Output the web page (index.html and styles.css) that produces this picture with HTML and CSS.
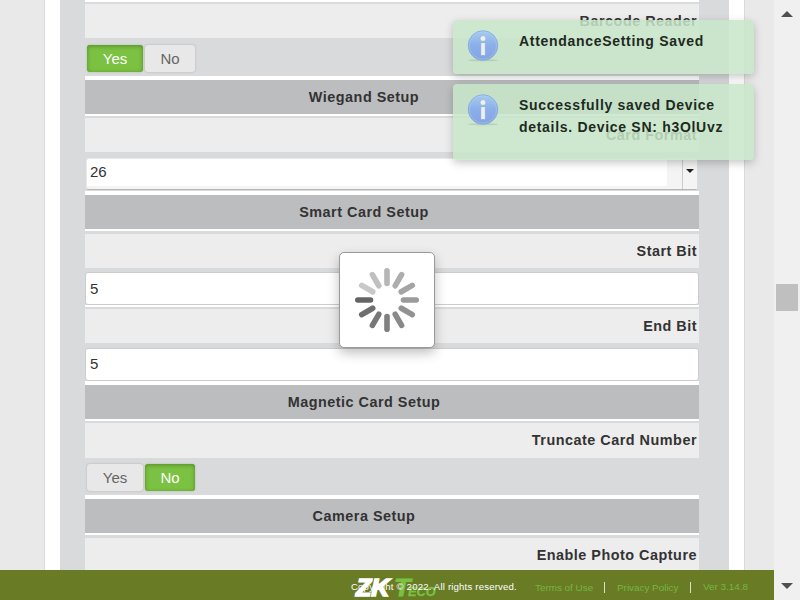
FILE: index.html
```
<!DOCTYPE html>
<html lang="en">
<head>
<meta charset="utf-8">
<title>Device Settings</title>
<link rel="stylesheet" href="styles.css">
</head>
<body>
<div class="viewport">
  <div class="page">
    <main class="sheet">
      <div class="panel">
        <form class="settings">
          <div class="rule first"></div>
          <div class="label"><span>Barcode Reader</span></div>
          <div class="toggle"><span class="btn yes on">Yes</span><span class="btn no">No</span></div>
          <div class="header"><span>Wiegand Setup</span></div>
          <div class="label"><span>Card Format</span></div>
          <div class="field select"><span class="value">26</span><span class="inner"></span><span class="drop"><svg width="8" height="4" viewBox="0 0 8 4"><path d="M0 0H8L4 4Z" fill="#222"/></svg></span></div>
          <div class="header"><span>Smart Card Setup</span></div>
          <div class="label gap3"><span>Start Bit</span></div>
          <div class="field start"><span class="value">5</span></div>
          <div class="rule"></div>
          <div class="label"><span>End Bit</span></div>
          <div class="field end"><span class="value">5</span></div>
          <div class="header"><span>Magnetic Card Setup</span></div>
          <div class="label tall"><span>Truncate Card Number</span></div>
          <div class="toggle second"><span class="btn yes">Yes</span><span class="btn no on">No</span></div>
          <div class="header"><span>Camera Setup</span></div>
          <div class="label gap3"><span>Enable Photo Capture</span></div>
        </form>
      </div>
    </main>
    <footer class="footer">
      <div class="logo"><span class="zk">ZK</span><span class="t">T</span><span class="eco">ECO</span></div>
      <span class="copy">Copyright © 2022. All rights reserved.</span>
      <span class="link terms">Terms of Use</span>
      <span class="link privacy">Privacy Policy</span>
      <span class="link version">Ver 3.14.8</span>
    </footer>
  </div>
  <aside class="scrollbar">
    <svg class="up" width="12" height="6" viewBox="0 0 12 6"><path d="M0 6L6 0L12 6Z" fill="#505050"/></svg>
    <div class="thumb"></div>
    <svg class="down" width="12" height="6" viewBox="0 0 12 6"><path d="M0 0H12L6 6Z" fill="#505050"/></svg>
  </aside>
  <div class="notices">
    <div class="notice short">
      <svg class="info" width="34" height="34" viewBox="0 0 34 34">
        <defs><linearGradient id="blue" x1="0" y1="0" x2="0" y2="1"><stop offset="0" stop-color="#a5ccef"/><stop offset=".5" stop-color="#8bafe9"/><stop offset="1" stop-color="#85a3e4"/></linearGradient></defs>
        <ellipse cx="17" cy="31.3" rx="15" ry="1" fill="#7b9c82" opacity=".3"/>
        <circle cx="17" cy="16.5" r="14.8" fill="url(#blue)" stroke="#82a8dc" stroke-width=".8"/>
        <circle cx="17" cy="16.5" r="13.6" fill="none" stroke="#b6d2f5" stroke-width=".8" opacity=".5"/>
        <circle cx="17" cy="9.5" r="2.9" fill="#eef2ef" stroke="#789cd8" stroke-width=".5"/>
        <rect x="14.8" y="13.7" width="4.5" height="12.8" rx=".5" fill="#eef0ed" stroke="#789cd8" stroke-width=".5"/>
      </svg>
      <p>AttendanceSetting Saved</p>
    </div>
    <div class="notice long">
      <svg class="info" width="34" height="34" viewBox="0 0 34 34">
        <ellipse cx="17" cy="31.3" rx="15" ry="1" fill="#7b9c82" opacity=".3"/>
        <circle cx="17" cy="16.5" r="14.8" fill="url(#blue)" stroke="#82a8dc" stroke-width=".8"/>
        <circle cx="17" cy="16.5" r="13.6" fill="none" stroke="#b6d2f5" stroke-width=".8" opacity=".5"/>
        <circle cx="17" cy="9.5" r="2.9" fill="#eef2ef" stroke="#789cd8" stroke-width=".5"/>
        <rect x="14.8" y="13.7" width="4.5" height="12.8" rx=".5" fill="#eef0ed" stroke="#789cd8" stroke-width=".5"/>
      </svg>
      <p>Successfully saved Device<br>details. Device SN: h3OlUvz</p>
    </div>
  </div>
  <div class="loader">
    <svg width="66" height="66" viewBox="-33 -33 66 66" stroke-width="5.6" stroke-linecap="round">
      <path d="M0-16.5V-29.2" stroke="#b6b6b6"/>
      <path d="M0-16.5V-29.2" stroke="#adadad" transform="rotate(30)"/>
      <path d="M0-16.5V-29.2" stroke="#a4a4a4" transform="rotate(60)"/>
      <path d="M0-16.5V-29.2" stroke="#9b9b9b" transform="rotate(90)"/>
      <path d="M0-16.5V-29.2" stroke="#929292" transform="rotate(120)"/>
      <path d="M0-16.5V-29.2" stroke="#898989" transform="rotate(150)"/>
      <path d="M0-16.5V-29.2" stroke="#808080" transform="rotate(180)"/>
      <path d="M0-16.5V-29.2" stroke="#777" transform="rotate(210)"/>
      <path d="M0-16.5V-29.2" stroke="#6e6e6e" transform="rotate(240)"/>
      <path d="M0-16.5V-29.2" stroke="#656565" transform="rotate(270)"/>
      <path d="M0-16.5V-29.2" stroke="#c8c8c8" transform="rotate(300)"/>
      <path d="M0-16.5V-29.2" stroke="#bfbfbf" transform="rotate(330)"/>
    </svg>
  </div>
</div>
</body>
</html>
```
FILE: styles.css
```
* { box-sizing: border-box; }
body { margin: 0; font-family: "Liberation Sans", Arial, sans-serif; font-size: 14px; color: #333; }
.viewport { position: relative; display: flex; width: 800px; height: 600px; overflow: hidden; }
.page { display: flex; flex-direction: column; width: 774px; height: 600px; background: #e9e9e9; }
.sheet { flex: 1; min-height: 0; overflow: hidden; width: 701px; margin-left: 44px; padding: 0 15px; background: #fff; border: solid #dadada; border-width: 0 1px; }
.panel { height: 570px; padding: 0 30px 0 25px; background: #d9dadc; }
.settings { width: 614px; }
.rule { height: 2px; background: #fff; }
.label { height: 36px; padding-right: 2px; border-top: 2px solid #d9dadc; background: #ededed; text-align: right; font-size: 14.4px; font-weight: bold; line-height: 34px; letter-spacing: .5px; }
.label.gap3 { height: 37px; border-top-width: 3px; }
.label.tall { height: 37px; line-height: 34px; }
.header { height: 40px; padding-right: 56px; border-top: 4px solid #fff; border-bottom: 2px solid #fff; background: #bcbdbf; text-align: center; font-size: 14.4px; font-weight: bold; line-height: 34px; letter-spacing: .5px; }
.toggle { display: flex; gap: 2px; height: 38px; padding: 7px 0 0 2px; }
.toggle.second { height: 37px; padding-top: 6px; }
.btn { height: 27px; border-radius: 3px; background: #e8e8e8; color: #666; box-shadow: 0 0 2px #aaa; font-size: 15px; line-height: 27px; text-align: center; }
.yes { width: 56px; }
.no { width: 50px; }
.btn.on { color: #fff; background: #7bc142; box-shadow: inset 0 1px 4px #568b28, 0 0 2px #9b9; }
.field { display: flex; height: 33px; padding-left: 4px; border: 1px solid #ccc; border-radius: 3px; background: #fff; font-size: 15px; line-height: 32px; }
.start { margin-top: 4px; }
.end { margin-top: 5px; line-height: 30px; }
.select { height: 32px; margin: 6px 1px 1px; padding-left: 3px; border: solid #e9e9e9; border-width: 1px 0 1px 1px; border-bottom-color: #b7b7b7; background: #f4f4f4; background-image: linear-gradient(#fff, #fff); background-size: 580px 27px; background-repeat: no-repeat; line-height: 25px; }
.inner { flex: 1; }
.drop { display: flex; justify-content: center; width: 16px; padding-top: 10px; border-left: 1px solid #ccc; border-right: 1px solid #ddd; background: #f4f4f4; }
.footer { position: relative; display: flex; flex: none; align-items: center; height: 30px; padding: 4px 25px 0 351px; background: #697b25; font-size: 9.9px; line-height: 14px; white-space: nowrap; }
.copy { position: relative; width: 184px; color: #fff; font-size: 9.6px; letter-spacing: .18px; }
.link { color: #76b73e; }
.terms { width: 70px; border-right: 1px solid #dce0cb; line-height: 11px; }
.privacy { width: 86px; padding-left: 12px; border-right: 1px solid #dce0cb; line-height: 11px; }
.version { padding-left: 12px; }
.logo { position: absolute; left: 356px; top: 6px; display: flex; align-items: flex-end; font-weight: bold; font-style: italic; font-size: 24px; line-height: 24px; color: #fff; }
.zk { width: 38px; letter-spacing: 0; -webkit-text-stroke: 1.6px #fff; transform: scaleX(1.04); transform-origin: left; }
.t { width: 14px; color: #79c143; -webkit-text-stroke: .8px #79c143; transform: scaleX(1.12); transform-origin: left; }
.eco { color: #79c143; font-size: 12px; line-height: 15px; -webkit-text-stroke: .3px #79c143; transform: scaleX(1.06); transform-origin: left; }
.scrollbar { display: flex; flex-direction: column; align-items: center; width: 26px; padding: 11px 0 11px; background: #f0f0f0; }
.thumb { width: 22px; height: 27px; margin-top: 267px; background: #bfbfbf; }
.down { margin-top: auto; }
.notices { position: absolute; left: 453px; top: 20px; display: flex; flex-direction: column; gap: 10px; width: 301px; }
.notice { display: flex; padding: 9px 0 0 13px; border-radius: 4px; background: rgba(200, 230, 201, .85); box-shadow: 0 3px 8px rgba(0,0,0,.22); color: #1d2a1d; font-size: 14px; font-weight: bold; line-height: 22px; letter-spacing: .7px; }
.notice p { margin: 1px 0 0 19px; white-space: nowrap; }
.short { height: 54px; }
.long { height: 76px; }
.loader { position: absolute; left: 339px; top: 252px; display: flex; align-items: center; justify-content: center; width: 96px; height: 96px; border: 1px solid #999; border-radius: 5px; background: #fff; box-shadow: 0 5px 12px rgba(0,0,0,.25); }
```
